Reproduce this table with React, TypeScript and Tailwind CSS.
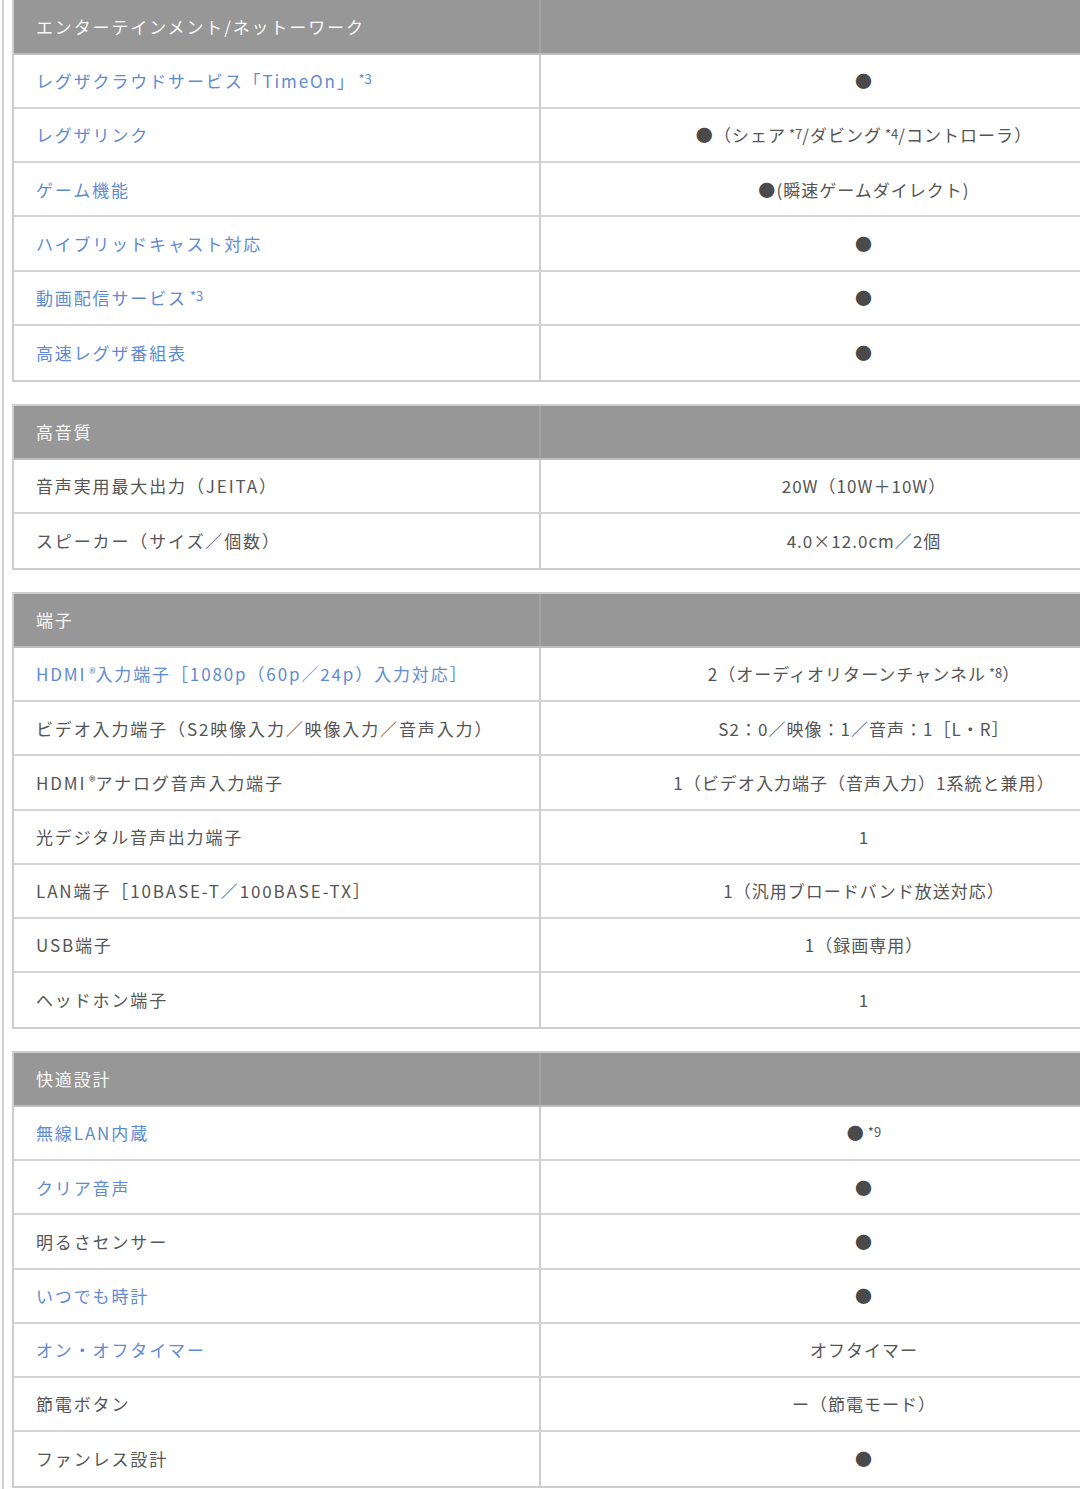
import React from "react";

type Cell = React.ReactNode;
type Row = { label: Cell; value: Cell; link?: boolean };
type Section = { title: string; rows: Row[] };

const Sup = ({ children }: { children: React.ReactNode }) => (
  <sup className="text-[13px] ml-[3px] tracking-normal relative top-[-0.3em]">{children}</sup>
);

const Dot = () => <span className="text-[#4a4a4a]">●</span>;

const sections: Section[] = [
  {
    title: "エンターテインメント/ネットーワーク",
    rows: [
      { label: <>レグザクラウドサービス「TimeOn」<Sup>*3</Sup></>, value: <Dot />, link: true },
      {
        label: "レグザリンク",
        value: (
          <>
            <Dot />（シェア<Sup>*7</Sup>/ダビング<Sup>*4</Sup>/コントローラ）
          </>
        ),
        link: true,
      },
      { label: "ゲーム機能", value: <><Dot /><span>(瞬速ゲームダイレクト)</span></>, link: true },
      { label: "ハイブリッドキャスト対応", value: <Dot />, link: true },
      { label: <>動画配信サービス<Sup>*3</Sup></>, value: <Dot />, link: true },
      { label: "高速レグザ番組表", value: <Dot />, link: true },
    ],
  },
  {
    title: "高音質",
    rows: [
      { label: "音声実用最大出力（JEITA）", value: "20W（10W＋10W）" },
      { label: "スピーカー（サイズ／個数）", value: "4.0×12.0cm／2個" },
    ],
  },
  {
    title: "端子",
    rows: [
      { label: <>HDMI<Sup>®</Sup>入力端子［1080p（60p／24p）入力対応］</>, value: <>2（オーディオリターンチャンネル<Sup>*8</Sup>）</>, link: true },
      { label: "ビデオ入力端子（S2映像入力／映像入力／音声入力）", value: "S2：0／映像：1／音声：1［L・R］" },
      { label: <>HDMI<Sup>®</Sup>アナログ音声入力端子</>, value: "1（ビデオ入力端子（音声入力）1系統と兼用）" },
      { label: "光デジタル音声出力端子", value: "1" },
      { label: "LAN端子［10BASE-T／100BASE-TX］", value: "1（汎用ブロードバンド放送対応）" },
      { label: "USB端子", value: "1（録画専用）" },
      { label: "ヘッドホン端子", value: "1" },
    ],
  },
  {
    title: "快適設計",
    rows: [
      { label: "無線LAN内蔵", value: <><Dot /><Sup>*9</Sup></>, link: true },
      { label: "クリア音声", value: <Dot />, link: true },
      { label: "明るさセンサー", value: <Dot /> },
      { label: "いつでも時計", value: <Dot />, link: true },
      { label: "オン・オフタイマー", value: "オフタイマー", link: true },
      { label: "節電ボタン", value: "ー（節電モード）" },
      { label: "ファンレス設計", value: <Dot /> },
    ],
  },
];

function Table({ section, first }: { section: Section; first?: boolean }) {
  return (
    <div
      className={`w-[1177px] border-2 border-[#cdcdcd] ${first ? "border-t-0" : ""}`}
    >
      <div className={`grid grid-cols-[527px_1fr] ${first ? "h-[55px]" : "h-[54px]"} bg-[#979797] border-b-2 border-[#bdbdbd]`}>
        <div className="flex items-center pl-[22px] text-[#f7f7f7] border-r-2 border-[#a4a4a4]">
          {section.title}
        </div>
        <div />
      </div>
      {section.rows.map((r, i) => (
        <div
          key={i}
          className={`grid grid-cols-[527px_1fr] h-[54.15px] bg-white ${
            i < section.rows.length - 1 ? "border-b-2 border-[#d4d4d4]" : ""
          }`}
        >
          <div
            className={`flex items-center pl-[22px] border-r-2 border-[#cdcdcd] whitespace-nowrap ${
              r.link ? "text-[#5f8bd2]" : "text-[#555555]"
            }`}
          >
            <span>{r.label}</span>
          </div>
          <div className="flex items-center justify-center text-[#555555] whitespace-nowrap tracking-[0.06em]">
            <span>{r.value}</span>
          </div>
        </div>
      ))}
    </div>
  );
}

export default function App() {
  return (
    <div
      className="w-[1080px] h-[1489px] overflow-hidden bg-white text-[17px] tracking-[0.11em]"
      style={{ fontFamily: '"Noto Sans CJK JP", "Noto Sans", sans-serif' }}
    >
      <div className="ml-[2px] h-full border-l-2 border-[#d0d0d0] pl-[8px] flex flex-col gap-[22px]">
        {sections.map((s, i) => (
          <Table key={i} section={s} first={i === 0} />
        ))}
      </div>
    </div>
  );
}
